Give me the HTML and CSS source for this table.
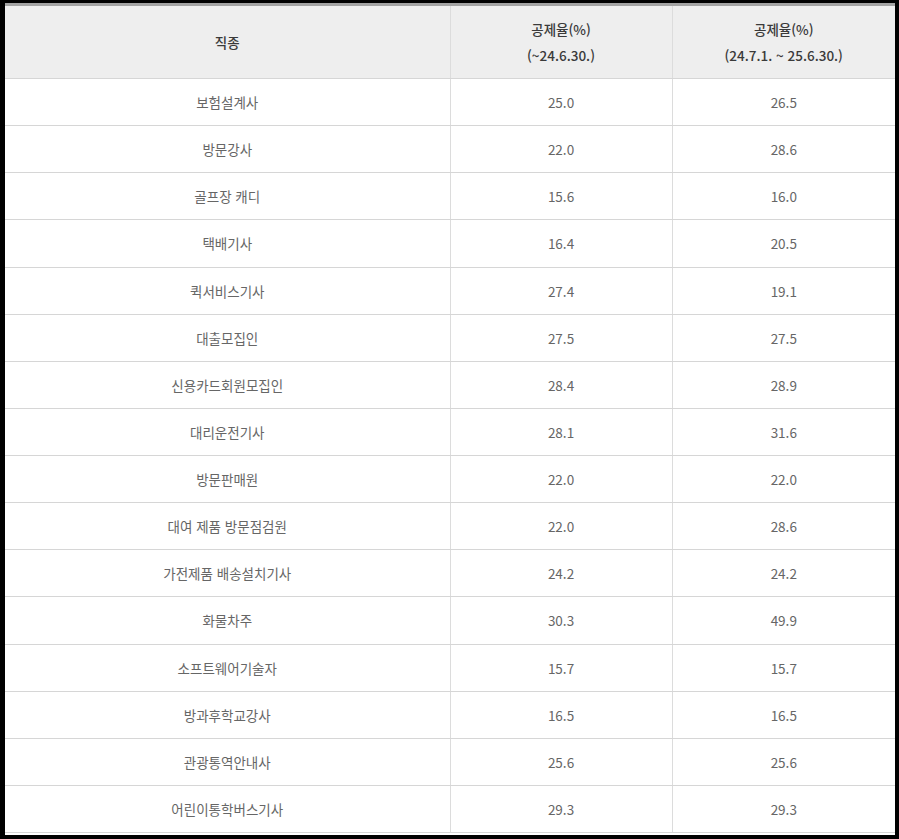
FILE: index.html
```html
<!DOCTYPE html>
<html lang="ko">
<head>
<meta charset="utf-8">
<link rel="stylesheet" href="styles.css">
</head>
<body>
<div class="frame">
<table class="rate">
<colgroup><col class="c1"><col class="c2"><col class="c3"></colgroup>
<thead>
<tr><th>직종</th><th>공제율(%)<br>(~24.6.30.)</th><th>공제율(%)<br>(24.7.1. ~ 25.6.30.)</th></tr>
</thead>
<tbody>
<tr><td>보험설계사</td><td>25.0</td><td>26.5</td></tr>
<tr><td>방문강사</td><td>22.0</td><td>28.6</td></tr>
<tr><td>골프장 캐디</td><td>15.6</td><td>16.0</td></tr>
<tr><td>택배기사</td><td>16.4</td><td>20.5</td></tr>
<tr><td>퀵서비스기사</td><td>27.4</td><td>19.1</td></tr>
<tr><td>대출모집인</td><td>27.5</td><td>27.5</td></tr>
<tr><td>신용카드회원모집인</td><td>28.4</td><td>28.9</td></tr>
<tr><td>대리운전기사</td><td>28.1</td><td>31.6</td></tr>
<tr><td>방문판매원</td><td>22.0</td><td>22.0</td></tr>
<tr><td>대여 제품 방문점검원</td><td>22.0</td><td>28.6</td></tr>
<tr><td>가전제품 배송설치기사</td><td>24.2</td><td>24.2</td></tr>
<tr><td>화물차주</td><td>30.3</td><td>49.9</td></tr>
<tr><td>소프트웨어기술자</td><td>15.7</td><td>15.7</td></tr>
<tr><td>방과후학교강사</td><td>16.5</td><td>16.5</td></tr>
<tr><td>관광통역안내사</td><td>25.6</td><td>25.6</td></tr>
<tr><td>어린이통학버스기사</td><td>29.3</td><td>29.3</td></tr>
</tbody>
</table>
</div>
</body>
</html>
```
FILE: styles.css
```css
html, body {
  margin: 0;
  padding: 0;
  background: #000;
}
.frame {
  padding: 3px 4px 0 5px;
  height: 836px;
  box-sizing: border-box;
  background: #000;
}
.rate {
  width: 890px;
  border-collapse: collapse;
  background: #fff;
  table-layout: fixed;
  font-family: "Noto Sans CJK KR", "Noto Sans", sans-serif;
  font-size: 13.5px;
  box-shadow: 0 2px 0 #fff;
}
.c1 { width: 445px; }
.c2 { width: 222px; }
.c3 { width: 223px; }
.rate thead th {
  background: #eeeeee;
  border-top: 3px solid #a3a3a3;
  border-bottom: 1px solid #d6d6d6;
  border-left: 1px solid #dcdcdc;
  height: 72px;
  padding: 0;
  font-weight: 500;
  color: #3a3a3a;
  line-height: 26px;
  text-align: center;
  vertical-align: middle;
}
.rate th:first-child,
.rate td:first-child {
  border-left: none;
}
.rate tbody td {
  height: 46.125px;
  padding: 0;
  border-bottom: 1px solid #d6d6d6;
  border-left: 1px solid #dcdcdc;
  color: #666;
  text-align: center;
  vertical-align: middle;
}
```
